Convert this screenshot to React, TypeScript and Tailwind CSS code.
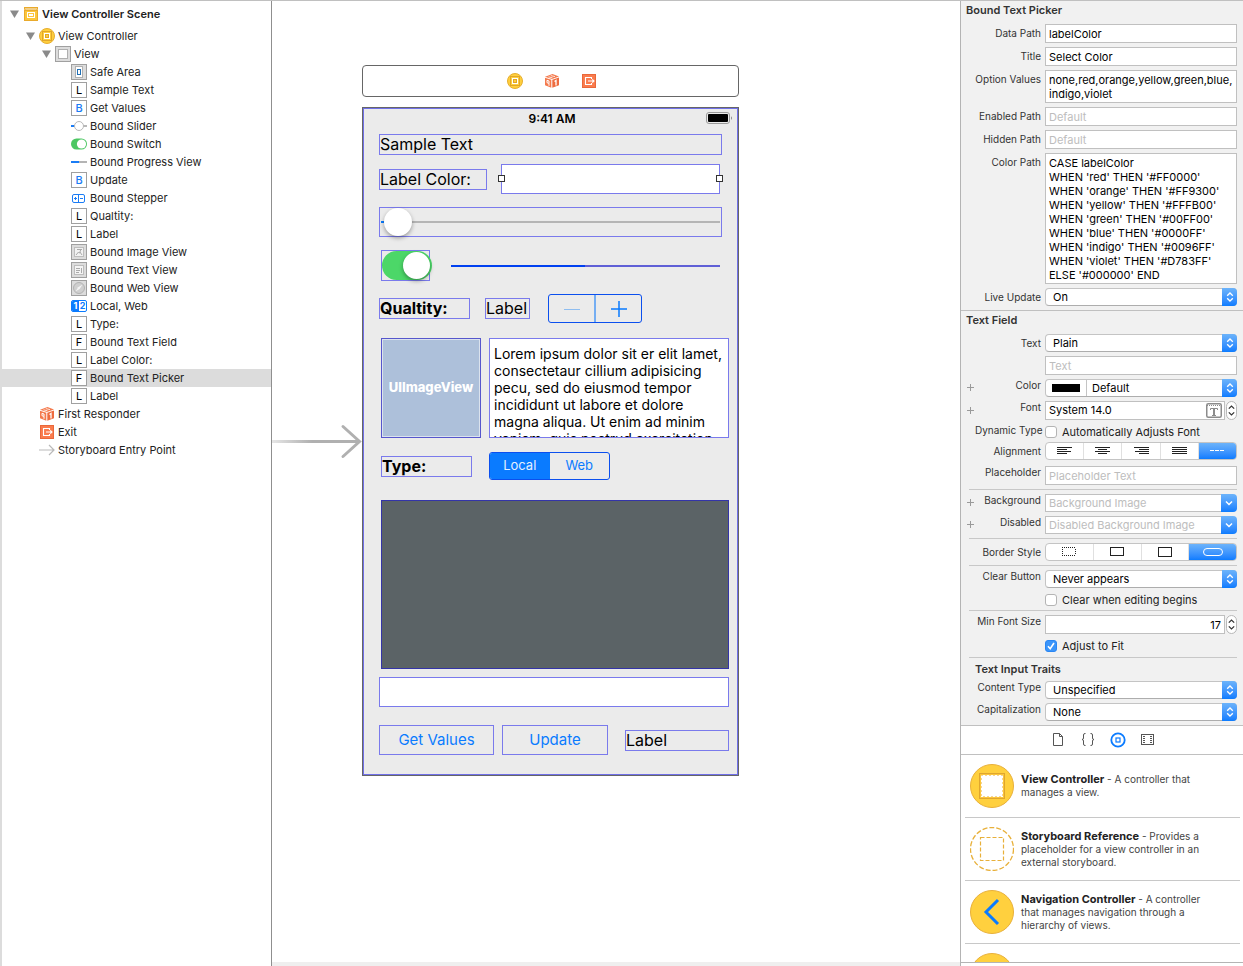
import React, { useId, useState } from "react";
import clsx from "clsx";

/* ---------- icons ---------- */

const ControllerIcon = () => (
  <svg width="16" height="16" viewBox="0 0 16 16" className="shrink-0">
    <circle cx="8" cy="8" r="7.5" fill="#ffcf3d" stroke="#e6ae2f" />
    <rect x="3.5" y="3.5" width="9" height="9" fill="none" stroke="#e0a62b" />
    <rect x="5" y="5" width="6" height="6" fill="#fff" />
    <rect x="6.5" y="6.5" width="3" height="3" fill="#ffcf3d" stroke="#e0a62b" />
  </svg>
);

const SceneIcon = () => (
  <svg width="14" height="14" viewBox="0 0 14 14" className="shrink-0">
    <rect width="14" height="14" fill="#e9aa2c" />
    <rect x="1" y="4" width="12" height="9" fill="#fcc63a" />
    <path d="M1 2.5l1-1 1 1 1-1 1 1 1-1 1 1 1-1 1 1 1-1 1 1 1-1 1 1" fill="none" stroke="#fff" />
    <rect x="3.5" y="5.5" width="7" height="5" fill="none" stroke="#fff" />
    <rect x="5.5" y="7.5" width="3" height="1" fill="none" stroke="#fff" />
  </svg>
);

const ResponderIcon = () => (
  <svg width="16" height="16" viewBox="0 0 16 16" className="shrink-0">
    <path d="M8.5 1L15 3.4 8 6 1 3.8z" fill="#f47a4d" />
    <path d="M1 4.8l6.3 2v8L1 12.3z" fill="#f47a4d" />
    <path d="M8.3 6.8L15 4.4v7.8l-6.7 2.6z" fill="#ee6c3f" />
    <path d="M4.5 3.8l4 1M6.8 2.6l4.2 1" stroke="#fff" strokeWidth=".8" />
    <path d="M3 7.3l2 .7v2.4l-2-.7zM5 10.4v2.4" fill="none" stroke="#fff" />
    <path d="M10.500 8.500l1.500-1v5" fill="none" stroke="#fff" strokeWidth="1.300" />
  </svg>
);

const ExitIcon = () => (
  <svg width="16" height="16" viewBox="0 0 16 16" className="shrink-0">
    <rect x="1.5" y="1.5" width="13" height="13" fill="#fa7b4d" stroke="#e9683a" />
    <path d="M10.5 6V4.5h-6v7h6V10M7 8h6M11.3 6.3L13 8l-1.7 1.7" fill="none" stroke="#fff" strokeWidth="1.1" />
  </svg>
);

const EntryIcon = () => (
  <svg width="16" height="16" viewBox="0 0 16 16" className="shrink-0">
    <path d="M0 8h15M10 3l5 5-5 5" fill="none" stroke="#b9b9b9" strokeWidth="1.2" />
  </svg>
);

const Boxed = ({ children, gray }: { children: React.ReactNode; gray?: boolean }) => (
  <svg width="16" height="16" viewBox="0 0 16 16" className="shrink-0">
    <rect x=".5" y=".5" width="15" height="15" fill={gray ? "#dcdcdc" : "#fff"} stroke="#a0a0a0" />
    {children}
  </svg>
);

const LetterIcon = ({ letter }: { letter: string }) => (
  <span
    className={clsx(
      "flex size-4 shrink-0 items-center justify-center border border-[#a0a0a0] bg-white text-[11px] leading-none",
      letter === "B" ? "font-medium text-[#1a7cf5]" : "text-black",
    )}
  >
    {letter}
  </span>
);

function ItemIcon({ kind }: { kind: string }) {
  switch (kind) {
    case "scene":
      return <SceneIcon />;
    case "controller":
      return <ControllerIcon />;
    case "view":
      return (
        <Boxed gray>
          <rect x="3.5" y="3.5" width="9" height="9" fill="#fff" stroke="#b0b0b0" />
        </Boxed>
      );
    case "safe":
      return (
        <Boxed gray>
          <rect x="4.5" y="2.5" width="7" height="11" fill="#fff" stroke="#b0b0b0" />
          <rect x="6.5" y="5.5" width="3" height="5" fill="none" stroke="#1f6fb5" />
        </Boxed>
      );
    case "image":
      return (
        <Boxed gray>
          <rect x="3.5" y="3.5" width="9" height="9" fill="#f2f2f2" stroke="#bdbdbd" />
          <path d="M5 11l2.5-3 1 1.2L10 5M6 5.5h5M9 8l2 3" fill="none" stroke="#aaa" />
        </Boxed>
      );
    case "text":
      return (
        <Boxed gray>
          <rect x="3.5" y="3.5" width="9" height="9" fill="#f4f4f4" stroke="#bdbdbd" />
          <path d="M5 6.5h4M5 8.5h4M5 10.5h3M10.5 6v5" fill="none" stroke="#aaa" />
        </Boxed>
      );
    case "web":
      return (
        <Boxed gray>
          <circle cx="8" cy="8" r="5.5" fill="#cfcfcf" stroke="#b2b2b2" />
          <path d="M11.5 4.5L7.2 7.2 4.5 11.5l4.3-2.7z" fill="#f4f4f4" />
        </Boxed>
      );
    case "slider":
      return (
        <svg width="16" height="16" viewBox="0 0 16 16" className="shrink-0">
          <path d="M0 8h4" stroke="#1a7cf5" strokeWidth="2" />
          <path d="M12 8h4" stroke="#b8b8b8" strokeWidth="2" />
          <circle cx="8" cy="8" r="4.5" fill="#fff" stroke="#b8b8b8" />
        </svg>
      );
    case "switch":
      return (
        <svg width="16" height="16" viewBox="0 0 16 16" className="shrink-0">
          <rect y="2.5" width="16" height="11" rx="5.5" fill="#4cc763" />
          <circle cx="10.5" cy="8" r="4.6" fill="#fff" />
        </svg>
      );
    case "progress":
      return (
        <svg width="16" height="16" viewBox="0 0 16 16" className="shrink-0">
          <path d="M0 8h8" stroke="#1a7cf5" strokeWidth="2" />
          <path d="M8 8h8" stroke="#b4b4b4" strokeWidth="2" />
        </svg>
      );
    case "stepper":
      return (
        <svg width="16" height="16" viewBox="0 0 16 16" className="shrink-0">
          <rect x="1.5" y="4.5" width="12" height="8" rx="1.5" fill="none" stroke="#1a7cf5" />
          <path d="M7.500 4.500v8M3 8.500h3M4.500 7v3M9 8.500h3" stroke="#1a7cf5" />
        </svg>
      );
    case "segmented":
      return (
        <span className="flex h-3 w-4 shrink-0 overflow-hidden rounded-[2px] border border-[#0a7bff] bg-white text-[9px] font-bold leading-[10px]">
          <span className="flex-1 bg-[#0a7bff] text-center text-white">1</span>
          <span className="flex-1 text-center text-[#0a7bff]">2</span>
        </span>
      );
    case "responder":
      return <ResponderIcon />;
    case "exit":
      return <ExitIcon />;
    case "entry":
      return <EntryIcon />;
    default:
      return <LetterIcon letter={kind} />;
  }
}

/* ---------- document outline ---------- */

type Item = { kind: string; name: string; level: 1 | 2 | 3; open?: boolean };

const items: Item[] = [
  { kind: "controller", name: "View Controller", level: 1, open: true },
  { kind: "view", name: "View", level: 2, open: true },
  { kind: "safe", name: "Safe Area", level: 3 },
  { kind: "L", name: "Sample Text", level: 3 },
  { kind: "B", name: "Get Values", level: 3 },
  { kind: "slider", name: "Bound Slider", level: 3 },
  { kind: "switch", name: "Bound Switch", level: 3 },
  { kind: "progress", name: "Bound Progress View", level: 3 },
  { kind: "B", name: "Update", level: 3 },
  { kind: "stepper", name: "Bound Stepper", level: 3 },
  { kind: "L", name: "Qualtity:", level: 3 },
  { kind: "L", name: "Label", level: 3 },
  { kind: "image", name: "Bound Image View", level: 3 },
  { kind: "text", name: "Bound Text View", level: 3 },
  { kind: "web", name: "Bound Web View", level: 3 },
  { kind: "segmented", name: "Local, Web", level: 3 },
  { kind: "L", name: "Type:", level: 3 },
  { kind: "F", name: "Bound Text Field", level: 3 },
  { kind: "L", name: "Label Color:", level: 3 },
  { kind: "F", name: "Bound Text Picker", level: 3 },
  { kind: "L", name: "Label", level: 3 },
  { kind: "responder", name: "First Responder", level: 1 },
  { kind: "exit", name: "Exit", level: 1 },
  { kind: "entry", name: "Storyboard Entry Point", level: 1 },
];

const Disclosure = ({ shown }: { shown?: boolean }) => (
  <svg width="9" height="8" viewBox="0 0 9 8" className="shrink-0">
    {shown && <path d="M0 .5h9L4.500 8z" fill="#8a8a8a" />}
  </svg>
);

function Outline() {
  const [selected, setSelected] = useState(19);
  return (
    <nav className="w-[272px] shrink-0 border-l-2 border-r border-l-[#dcdcdc] border-r-[#8f8f8f] bg-white text-[11px] text-[#222]">
      <div className="flex h-[26px] items-center pl-2 font-semibold">
        <Disclosure shown />
        <span className="ml-[5px] mr-1">
          <SceneIcon />
        </span>
        View Controller Scene
      </div>
      <ul>
        {items.map((item, i) => (
          <li key={i}>
            <button
              onClick={() => setSelected(i)}
              className={clsx(
                "flex h-[18px] w-full items-center text-left",
                item.level === 1 && "pl-6",
                item.level === 2 && "pl-10",
                item.level === 3 && "pl-14",
                i === selected && "bg-[#dcdcdc]",
              )}
            >
              <Disclosure shown={item.open} />
              <span className="ml-1 mr-[3px]">
                <ItemIcon kind={item.kind} />
              </span>
              {item.name}
            </button>
          </li>
        ))}
      </ul>
    </nav>
  );
}

/* ---------- canvas ---------- */

const frame = "border border-[#7a7aec]";

const Label = ({ children, className }: { children: React.ReactNode; className?: string }) => (
  <div className={clsx("h-[21px] text-[16px] leading-[19px] text-black", frame, className)}>{children}</div>
);

const Handle = ({ className }: { className: string }) => (
  <span className={clsx("absolute top-[11px] size-[7px] border border-[#333] bg-white", className)} />
);

const lorem =
  "Lorem ipsum dolor sit er elit lamet, consectetaur cillium adipisicing pecu, sed do eiusmod tempor incididunt ut labore et dolore magna aliqua. Ut enim ad minim veniam, quis nostrud exercitation ullamco laboris.";

function Phone() {
  const [tab, setTab] = useState("Local");
  return (
    <div className="w-[377px] shrink-0 border border-[#666]">
      <div className="border border-[#7070e8] bg-[#ebebeb] pb-[19px] pl-[15px] pr-2">
        <div className="relative flex h-[25px] items-start justify-center pr-1 pt-px">
          <span className="text-[12px] font-semibold leading-[18px] text-black">9:41 AM</span>
          <svg width="27" height="12" viewBox="0 0 27 12" className="absolute right-[-4px] top-[3px]">
            <rect x=".5" y=".5" width="23" height="11" rx="2.500" fill="none" stroke="#999" />
            <rect x="2" y="2" width="20" height="8" rx="1" fill="#000" />
            <path d="M25 4.200c1.300.5 1.300 3.100 0 3.600z" fill="#888" />
          </svg>
        </div>

        <div className="pr-[7px]">
          <Label>Sample Text</Label>
          <div className="mt-[9px] flex items-center justify-between pr-[2px]">
            <Label className="w-[108px]">Label Color:</Label>
            <div className="relative">
              <input aria-label="Label color" className={clsx("block h-[30px] w-[219px] bg-white px-2 outline-none", frame)} />
              <Handle className="left-[-3px]" />
              <Handle className="right-[-3px]" />
            </div>
          </div>
          <div className={clsx("mt-[13px] flex h-[30px] items-center px-px", frame)}>
            <input
              type="range"
              aria-label="Bound slider"
              defaultValue={1}
              className="h-[2px] w-full appearance-none bg-[linear-gradient(to_right,#0a7bff_4px,#b5b5b5_4px)] [&::-webkit-slider-thumb]:size-7 [&::-webkit-slider-thumb]:appearance-none [&::-webkit-slider-thumb]:rounded-full [&::-webkit-slider-thumb]:bg-white [&::-webkit-slider-thumb]:shadow-[0_2px_4px_rgba(0,0,0,0.35)]"
            />
          </div>
        </div>

        <div className="mt-[13px] flex h-[31px] items-center pl-[2px] pr-[9px]">
          <div className={clsx("h-[31px] w-[49px]", frame)}>
            <input
              type="checkbox"
              role="switch"
              aria-label="Bound switch"
              defaultChecked
              className="flex h-[29px] w-[50px] appearance-none items-center justify-end rounded-full bg-[#c8c8c8] px-[2px] before:size-[27px] before:rounded-full before:bg-white before:shadow-[0_2px_4px_rgba(0,0,0,0.35)] checked:bg-[#4cd768]"
            />
          </div>
          <div
            role="progressbar"
            aria-valuenow={50}
            className="ml-[21px] h-[2px] flex-1 bg-[linear-gradient(to_right,#0040f0_50%,#5f5fd6_50%)]"
          />
        </div>

        <div className="mt-[13px] flex items-start">
          <Label className="mt-1 w-[91px] font-bold">Qualtity:</Label>
          <Label className="ml-[15px] mt-1 w-[45px]">Label</Label>
          <div className="ml-[18px] flex h-[29px] w-[94px] divide-x-2 divide-[#75aef2] rounded-[3px] border border-[#0b4fee] text-[#0a7bff]">
            <button aria-label="Decrease" className="flex flex-1 items-center justify-center">
              <svg width="16" height="16" viewBox="0 0 16 16"><path d="M0 8.500h16" stroke="#8ebdf0" /></svg>
            </button>
            <button aria-label="Increase" className="flex flex-1 items-center justify-center">
              <svg width="16" height="16" viewBox="0 0 16 16"><path d="M0 8h16M8 0v16" stroke="#0a7bff" strokeWidth="1.500" /></svg>
            </button>
          </div>
        </div>

        <div className="mt-[15px] flex gap-2 pl-[2px]">
          <div className="flex size-[100px] shrink-0 items-center justify-center border border-[#5656cc] bg-[#adc0da] text-[13px] font-extrabold text-white ring-1 ring-inset ring-[#dbe3ee]">
            UIImageView
          </div>
          <textarea
            aria-label="Bound text view"
            defaultValue={lorem}
            className={clsx(
              "block h-[100px] min-w-0 flex-1 resize-none overflow-hidden bg-white px-1 pt-[6px] text-[14px] leading-[17px] text-black outline-none",
              frame,
            )}
          />
        </div>

        <div className="mt-[14px] flex items-center pl-[2px]">
          <Label className="w-[91px] font-bold">Type:</Label>
          <div className="ml-[17px] flex h-[28px] w-[121px] overflow-hidden rounded-[3px] border border-[#0b4fee] text-[13px]">
            {["Local", "Web"].map((name) => (
              <button
                key={name}
                onClick={() => setTab(name)}
                className={clsx("flex-1", tab === name ? "bg-[#0a7bff] text-[#e4efff]" : "text-[#0a7bff]")}
              >
                {name}
              </button>
            ))}
          </div>
        </div>

        <div className="ml-[2px] mt-5 h-[169px] border border-[#3434a8] bg-[#5b6366]" />
        <input aria-label="Bound text field" className={clsx("mt-2 block h-[30px] w-full bg-white px-2 outline-none", frame)} />

        <div className="mt-[18px] flex items-center text-[15px] text-[#0a7bff]">
          <button className={clsx("h-[30px] w-[115px]", frame)}>Get Values</button>
          <button className={clsx("ml-2 h-[30px] w-[106px]", frame)}>Update</button>
          <Label className="ml-[17px] flex-1">Label</Label>
        </div>
      </div>
    </div>
  );
}

function Canvas() {
  return (
    <main className="flex min-w-0 flex-1 flex-col overflow-hidden bg-white">
      <div className="flex-1 pt-16">
        <div className="ml-[90px] flex h-8 w-[377px] items-center justify-center gap-[21px] rounded-[4px] border border-[#666] pl-[2px]">
          <ControllerIcon />
          <ResponderIcon />
          <ExitIcon />
        </div>
        <div className="mt-[10px] flex items-center">
          <svg width="90" height="36" viewBox="0 0 90 36" className="shrink-0">
            <defs>
              <linearGradient id="shaft" gradientUnits="userSpaceOnUse" x1="0" y1="0" x2="40" y2="0">
                <stop offset="0" stopColor="#e6e6e6" />
                <stop offset="1" stopColor="#b0b0b0" />
              </linearGradient>
            </defs>
            <rect y="16" width="86" height="3" fill="url(#shaft)" />
            <path d="M71 2.500l16.500 15-16.500 15" fill="none" stroke="#b0b0b0" strokeWidth="3" strokeLinecap="round" />
          </svg>
          <Phone />
        </div>
      </div>
      <div className="h-1 bg-[#efefef]" />
    </main>
  );
}

/* ---------- inspector ---------- */

const box = "block w-full border border-[#c0c0c0] bg-white px-[3px] text-[11px] text-black outline-none placeholder:text-[#bdbdbd]";
const blue = "bg-linear-to-b from-[#6cb3fa] to-[#0a7cff]";

type RowProps = { id?: string; label?: string; plus?: boolean; raised?: boolean; className?: string; children: React.ReactNode };

const Row = ({ id, label, plus, raised, className, children }: RowProps) => (
  <div className={clsx("flex items-start pl-[6px] pr-[6px]", className)}>
    <span className="w-2 shrink-0 self-center">
      {plus && (
        <button aria-label={"Add " + label} className="block">
          <svg width="8" height="8" viewBox="0 0 8 8"><path d="M0 3.500h7M3.500 0v7" stroke="#9a9a9a" /></svg>
        </button>
      )}
    </span>
    <label
      htmlFor={id}
      className={clsx("mr-1 w-[66px] shrink-0 whitespace-nowrap text-right text-[10px] text-[#333]", raised ? "leading-[13px]" : "leading-[18px]")}
    >
      {label}
    </label>
    <div className="flex min-w-0 flex-1 items-center">{children}</div>
  </div>
);

type FieldProps = Omit<RowProps, "children"> & { value?: string; placeholder?: string };

function TextRow({ value, placeholder, ...row }: FieldProps) {
  const id = useId();
  return (
    <Row id={id} {...row}>
      <input id={id} defaultValue={value} placeholder={placeholder} className={clsx(box, "h-[19px]")} />
    </Row>
  );
}

function AreaRow({ value, tall, ...row }: FieldProps & { tall?: boolean }) {
  const id = useId();
  return (
    <Row id={id} {...row}>
      <textarea
        id={id}
        defaultValue={value}
        className={clsx(box, "resize-none overflow-hidden py-[2px] leading-[14px]", tall ? "h-[131px]" : "h-[33px]")}
      />
    </Row>
  );
}

const UpDown = () => (
  <svg width="8" height="10" viewBox="0 0 8 10" fill="none" stroke="currentColor" strokeWidth="1.300">
    <path d="M1.200 3.800L4 1l2.800 2.800M1.200 6.200L4 9l2.800-2.800" />
  </svg>
);

function SelectRow({ value, swatch, ...row }: FieldProps & { swatch?: boolean }) {
  const id = useId();
  return (
    <Row id={id} {...row}>
      <div className="relative h-[18px] w-full">
        <select
          id={id}
          className={clsx(
            "block h-[18px] w-full appearance-none rounded-[4px] border border-[#c4c4c4] border-b-[#adadad] bg-white text-[11px] text-black outline-none",
            swatch ? "pl-[46px]" : "pl-[7px]",
          )}
        >
          <option>{value}</option>
        </select>
        {swatch && (
          <span className="pointer-events-none absolute left-px top-px flex h-4 w-[41px] items-center border-r border-[#c4c4c4] pl-[6px]">
            <span className="h-2 w-[28px] bg-black" />
          </span>
        )}
        <span className={clsx("pointer-events-none absolute right-0 top-0 flex h-[18px] w-[15px] items-center justify-center rounded-r-[4px] text-white", blue)}>
          <UpDown />
        </span>
      </div>
    </Row>
  );
}

function ComboRow({ placeholder, ...row }: FieldProps) {
  const id = useId();
  return (
    <Row id={id} {...row}>
      <input id={id} placeholder={placeholder} className={clsx(box, "h-[18px] min-w-0 flex-1 border-r-0")} />
      <button aria-label={"Choose " + row.label} className={clsx("flex h-[18px] w-4 shrink-0 items-center justify-center rounded-r-[4px] text-white", blue)}>
        <svg width="8" height="6" viewBox="0 0 8 6" fill="none" stroke="#fff" strokeWidth="1.500"><path d="M1 1.500l3 3 3-3" /></svg>
      </button>
    </Row>
  );
}

function CheckRow({ text, checked, ...row }: FieldProps & { text: string; checked?: boolean }) {
  const [on, setOn] = useState(!!checked);
  return (
    <Row {...row}>
      <label className="flex h-4 items-center gap-[5px] text-[11px] text-[#222]">
        <span className="relative flex size-3">
          <input
            type="checkbox"
            checked={on}
            onChange={() => setOn(!on)}
            className="size-3 appearance-none rounded-[3px] border border-[#b4b4b4] bg-white checked:border-[#2a86f3] checked:bg-[#3b95fa]"
          />
          {on && (
            <svg width="12" height="12" viewBox="0 0 12 12" className="pointer-events-none absolute inset-0">
              <path d="M3 6.300L5.200 8.800 9 3" fill="none" stroke="#fff" strokeWidth="1.600" />
            </svg>
          )}
        </span>
        {text}
      </label>
    </Row>
  );
}

const Stepper = () => (
  <span className="ml-px flex h-[19px] w-[11px] shrink-0 flex-col items-center justify-between rounded-full border border-[#b8b8b8] bg-white py-[3px]">
    <button aria-label="Increase" className="block">
      <svg width="7" height="4" viewBox="0 0 7 4" className="block"><path d="M.8 3.600L3.500 1l2.700 2.600" fill="none" stroke="#333" strokeWidth="1.200" /></svg>
    </button>
    <button aria-label="Decrease" className="block">
      <svg width="7" height="4" viewBox="0 0 7 4" className="block"><path d="M.8.4L3.500 3 6.200.4" fill="none" stroke="#333" strokeWidth="1.200" /></svg>
    </button>
  </span>
);

function Segments({ names, icons }: { names: string[]; icons: React.ReactNode[] }) {
  const [active, setActive] = useState(names.length - 1);
  return (
    <div className="flex h-[18px] w-full divide-x divide-[#e0e0e0] overflow-hidden rounded-[4px] border border-[#c4c4c4] bg-white">
      {icons.map((icon, i) => (
        <button
          key={names[i]}
          aria-label={names[i]}
          onClick={() => setActive(i)}
          className={clsx("flex flex-1 items-center justify-center", i === active ? clsx(blue, "text-white") : "text-[#222]")}
        >
          {icon}
        </button>
      ))}
    </div>
  );
}

const Lines = ({ d }: { d: string }) => (
  <svg width="15" height="10" viewBox="0 0 15 10" stroke="currentColor"><path d={d} /></svg>
);

const Shape = ({ children }: { children: React.ReactNode }) => (
  <svg width="20" height="10" viewBox="0 0 20 10" fill="none" stroke="currentColor">{children}</svg>
);

const Header = ({ children, className }: { children: React.ReactNode; className: string }) => (
  <h2 className={clsx("flex items-center text-[11px] font-semibold text-[#333]", className)}>{children}</h2>
);

const Rule = () => <hr className="ml-2 mr-[6px] border-t border-[#c8c8c8]" />;

const colorPath = `CASE labelColor
WHEN 'red' THEN '#FF0000'
WHEN 'orange' THEN '#FF9300'
WHEN 'yellow' THEN '#FFFB00'
WHEN 'green' THEN '#00FF00'
WHEN 'blue' THEN '#0000FF'
WHEN 'indigo' THEN '#0096FF'
WHEN 'violet' THEN '#D783FF'
ELSE '#000000' END`;

type Entry = { name?: string; text?: string; art: React.ReactNode };

const library: Entry[] = [
  {
    name: "View Controller",
    text: "A controller that manages a view.",
    art: (
      <>
        <circle cx="22" cy="22" r="21.500" fill="#ffd03e" stroke="#e8b03a" />
        <rect x="9.500" y="9.500" width="25" height="25" fill="#fcc63c" stroke="#e0a62f" />
        <rect x="11" y="11" width="22" height="22" fill="#fff" />
        <rect x="11.500" y="11.500" width="21" height="21" fill="none" stroke="#e5ab34" strokeDasharray="1 3" />
      </>
    ),
  },
  {
    name: "Storyboard Reference",
    text: "Provides a placeholder for a view controller in an external storyboard.",
    art: (
      <g fill="none" stroke="#e8b03a">
        <circle cx="22" cy="22" r="21.500" strokeDasharray="5 2" strokeWidth="1.300" />
        <rect x="10.500" y="10.500" width="23" height="23" strokeDasharray="4 2" strokeWidth="1.200" />
      </g>
    ),
  },
  {
    name: "Navigation Controller",
    text: "A controller that manages navigation through a hierarchy of views.",
    art: (
      <>
        <circle cx="22" cy="22" r="21.500" fill="#ffd03e" stroke="#e8b03a" />
        <path d="M28 10L16 22l12 12" fill="none" stroke="#0a7bff" strokeWidth="3" />
      </>
    ),
  },
  {
    art: <circle cx="22" cy="22" r="21.500" fill="#ffd03e" stroke="#e8b03a" />,
  },
];

function Inspector() {
  const fontId = useId();
  const sizeId = useId();
  return (
    <aside className="flex w-[283px] shrink-0 flex-col border-l border-[#b4b4b4] bg-[#f1f1f1]">
      <section className="flex shrink-0 flex-col gap-1 border-b border-[#c0c0c0] pb-1">
        <Header className="h-[19px] pl-[5px]">Bound Text Picker</Header>
        <TextRow label="Data Path" value="labelColor" />
        <TextRow label="Title" value="Select Color" />
        <AreaRow label="Option Values" value="none,red,orange,yellow,green,blue,&#10;indigo,violet" />
        <TextRow label="Enabled Path" placeholder="Default" />
        <TextRow label="Hidden Path" placeholder="Default" />
        <AreaRow label="Color Path" value={colorPath} tall />
        <SelectRow label="Live Update" value="On" />
      </section>

      <section className="flex shrink-0 flex-col gap-1 border-b border-[#c0c0c0] pb-1">
        <Header className="h-[19px] pl-[5px]">Text Field</Header>
        <SelectRow label="Text" value="Plain" />
        <TextRow placeholder="Text" />
        <SelectRow label="Color" value="Default" plus raised swatch />
        <Row id={fontId} label="Font" plus raised>
          <div className="flex h-[19px] min-w-0 flex-1 items-center border border-[#c0c0c0] bg-white pr-[2px]">
            <input id={fontId} defaultValue="System 14.0" className="min-w-0 flex-1 px-[3px] text-[11px] text-black outline-none" />
            <svg width="16" height="15" viewBox="0 0 16 15" className="shrink-0" fill="none" stroke="#8c8c8c">
              <rect x=".75" y=".75" width="14.500" height="13.500" rx="1.500" strokeWidth="1.500" />
              <path d="M1 2.500h14" strokeDasharray="1 1" />
              <path d="M4.500 7v-1.500h7V7M6 12.500h4" />
              <path d="M8 5v7.500" strokeWidth="2" />
            </svg>
          </div>
          <Stepper />
        </Row>
        <CheckRow label="Dynamic Type" text="Automatically Adjusts Font" raised className="h-[14px]" />
        <Row label="Alignment" className="h-5">
          <Segments
            names={["Left", "Center", "Right", "Justified", "Natural"]}
            icons={[
              <Lines d="M0 1.500h15M0 3.500h10M0 5.500h14M0 7.500h10" />,
              <Lines d="M0 1.500h15M3 3.500h9M0 5.500h15M3 7.500h9" />,
              <Lines d="M0 1.500h15M5 3.500h10M1 5.500h14M5 7.500h10" />,
              <Lines d="M0 1.500h15M0 3.500h15M0 5.500h15M0 7.500h15" />,
              <Lines d="M0 4.500h4M5 4.500h4M10 4.500h4" />,
            ]}
          />
        </Row>
        <TextRow label="Placeholder" placeholder="Placeholder Text" raised />
        <Rule />
        <ComboRow label="Background" placeholder="Background Image" plus raised />
        <ComboRow label="Disabled" placeholder="Disabled Background Image" plus raised />
        <Rule />
        <Row label="Border Style">
          <Segments
            names={["None", "Line", "Bezel", "Rounded"]}
            icons={[
              <Shape><path d="M3 .5h14M3 8.500h14M3.500 2v6M16.500 2v6" strokeDasharray="1 1" /></Shape>,
              <Shape><rect x="3.500" y=".5" width="13" height="8" /></Shape>,
              <Shape><rect x="3.500" y=".5" width="13" height="9" /></Shape>,
              <Shape><rect x=".5" y="1.500" width="19" height="7" rx="3.500" /></Shape>,
            ]}
          />
        </Row>
        <Rule />
        <SelectRow label="Clear Button" value="Never appears" raised />
        <CheckRow text="Clear when editing begins" className="h-[14px]" />
        <Rule />
        <Row id={sizeId} label="Min Font Size" raised>
          <input id={sizeId} defaultValue="17" className={clsx(box, "h-[19px] min-w-0 flex-1 text-right")} />
          <Stepper />
        </Row>
        <CheckRow text="Adjust to Fit" checked className="h-[15px]" />
        <Rule />
        <Header className="h-[15px] pl-[14px]">Text Input Traits</Header>
        <SelectRow label="Content Type" value="Unspecified" raised />
        <SelectRow label="Capitalization" value="None" raised />
      </section>

      <div className="flex h-[29px] shrink-0 items-center justify-center gap-[14px] border-b border-[#c0c0c0] bg-white pl-[2px] text-[#555]">
        <button aria-label="File templates">
          <svg width="16" height="16" viewBox="0 0 16 16" fill="none" stroke="currentColor"><path d="M3.500 1.500h6l3 3v9h-9zM9.500 1.500v3h3" /></svg>
        </button>
        <button aria-label="Code snippets">
          <svg width="16" height="16" viewBox="0 0 16 16" fill="none" stroke="currentColor">
            <path d="M5.500 1.500h-.5Q3.500 1.500 3.500 3v3Q3.500 7.500 2 7.500 3.500 7.500 3.500 9v3q0 1.500 1.500 1.500h.5M10.500 1.500h.5q1.500 0 1.500 1.500v3Q12.500 7.500 14 7.500 12.500 7.500 12.500 9v3q0 1.500-1.500 1.500h-.5" />
          </svg>
        </button>
        <button aria-label="Objects">
          <svg width="16" height="16" viewBox="0 0 16 16" fill="none" stroke="#0a7bff"><circle cx="8" cy="8" r="6.700" strokeWidth="1.800" /><rect x="6" y="6" width="4" height="4" strokeWidth="1.200" /></svg>
        </button>
        <button aria-label="Media">
          <svg width="16" height="16" viewBox="0 0 16 16" fill="none" stroke="currentColor">
            <rect x="1.500" y="2.500" width="12" height="10" />
            <path d="M4 4v8M11 4v8" strokeDasharray="1 1" strokeWidth="2" />
          </svg>
        </button>
      </div>

      <ul className="min-h-0 flex-1 overflow-hidden border-b border-[#b4b4b4] bg-white pl-1 pr-[3px]">
        {library.map((entry, i) => (
          <li key={i} className="flex h-[63px] items-center gap-[7px] border-b border-[#c8c8c8] pl-[5px] pr-6">
            <svg width="44" height="44" viewBox="0 0 44 44" className="shrink-0">{entry.art}</svg>
            {entry.name && (
              <p className="text-[10px] leading-[13px] text-[#444]">
                <strong className="text-[11px] font-bold text-[#222]">{entry.name}</strong> - {entry.text}
              </p>
            )}
          </li>
        ))}
      </ul>
      <div className="h-[3px] shrink-0 bg-white" />
    </aside>
  );
}

export default function App() {
  return (
    <div className="flex h-screen overflow-hidden border-t border-[#c0c0c0] bg-white font-['Inter','Liberation_Sans',sans-serif]">
      <Outline />
      <Canvas />
      <Inspector />
    </div>
  );
}
